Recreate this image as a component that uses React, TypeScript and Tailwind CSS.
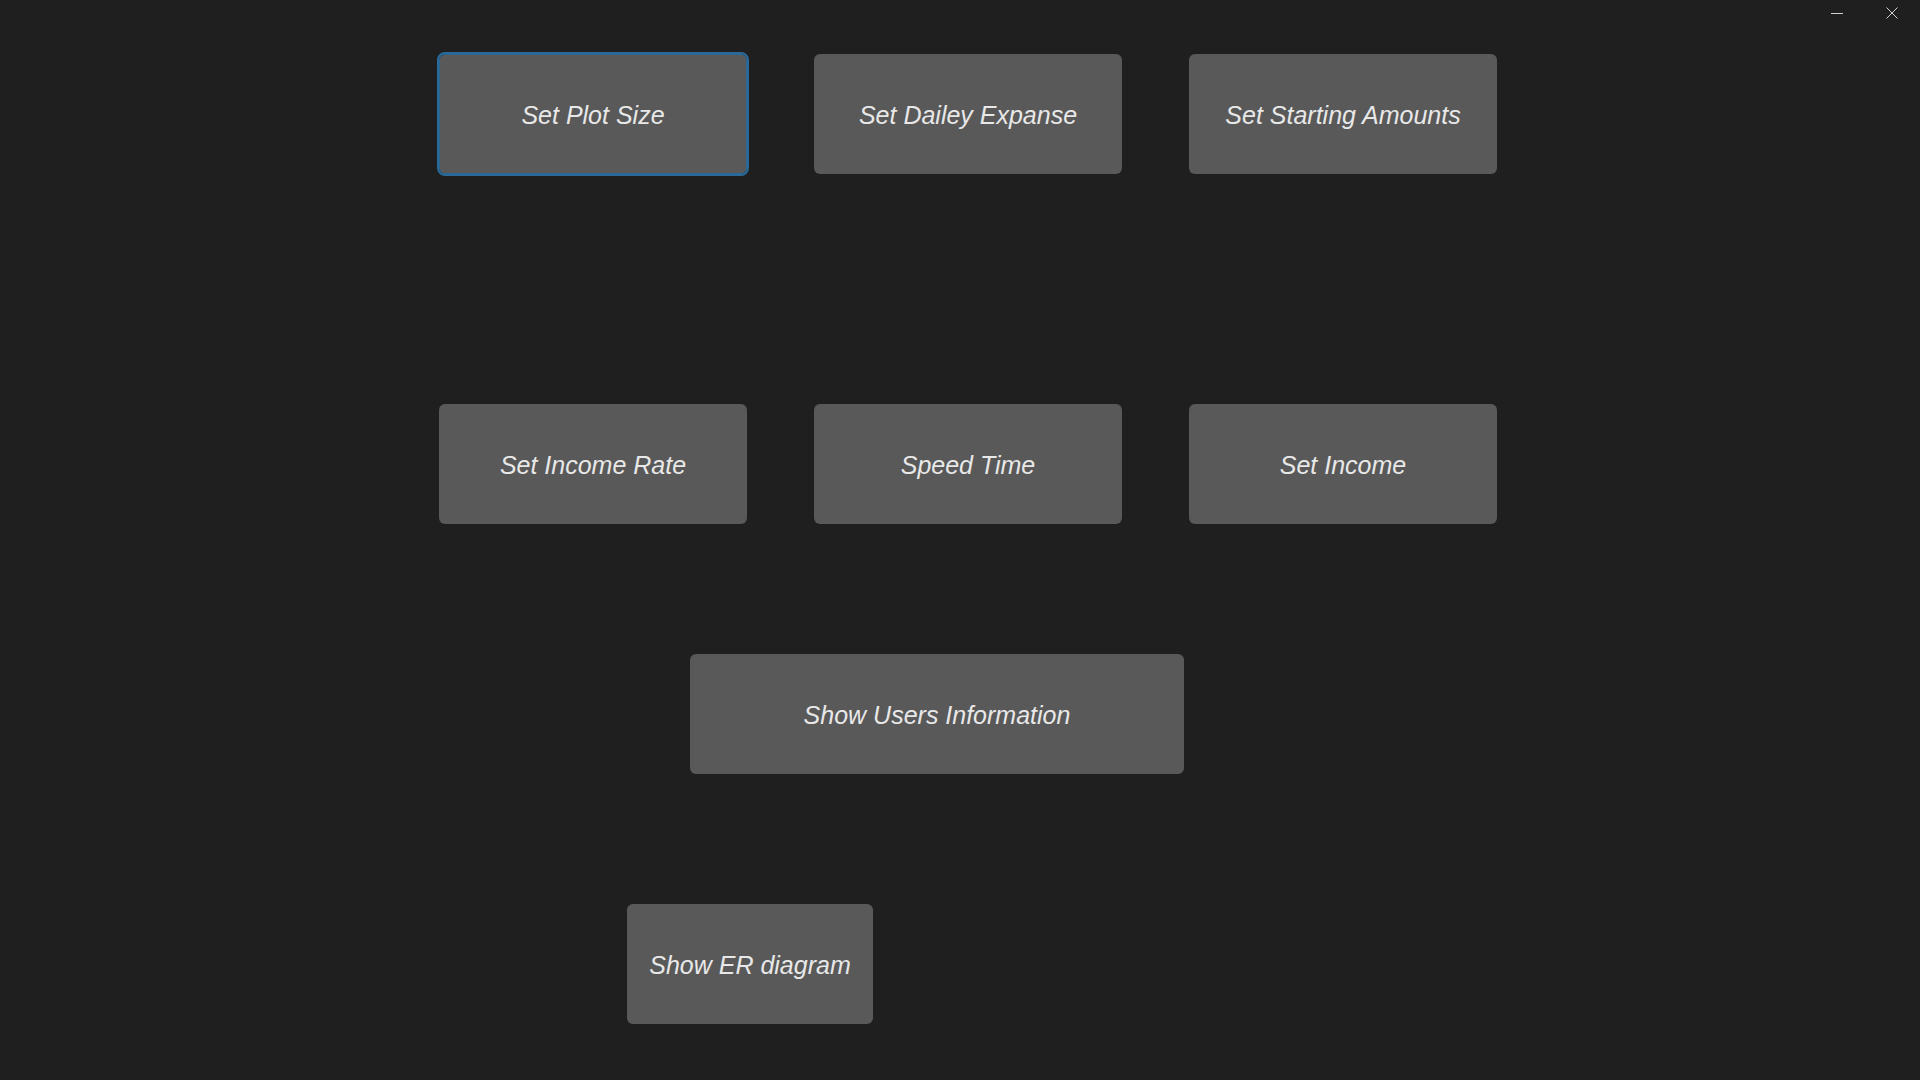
type Btn = { label: string; width: string; focused?: boolean };

function PanelButton({ label, width, focused }: Btn) {
  return (
    <button
      className={`h-[120px] ${width} flex items-center justify-center pt-[4px] rounded-[6px] bg-[#595959] text-[25px] italic text-[#e8e8e8] ${
        focused ? "border border-[#2c6690] outline-2 outline-solid outline-[#2a6a9a]" : ""
      }`}
      style={{ fontFamily: '"Liberation Sans", Arial, sans-serif' }}
    >
      {label}
    </button>
  );
}

export default function App() {
  return (
    <div className="relative w-[1920px] h-[1080px] overflow-hidden bg-[#1f1f1f]">
      {/* window controls */}
      <div className="absolute top-[7px] right-[22px] flex items-center gap-[43px]">
        <svg width="12" height="12" viewBox="0 0 12 12">
          <line x1="0" y1="6.5" x2="12" y2="6.5" stroke="#d0d0d0" strokeWidth="1" />
        </svg>
        <svg width="12" height="12" viewBox="0 0 12 12">
          <line x1="0.5" y1="0.5" x2="11.5" y2="11.5" stroke="#d0d0d0" strokeWidth="1" />
          <line x1="11.5" y1="0.5" x2="0.5" y2="11.5" stroke="#d0d0d0" strokeWidth="1" />
        </svg>
      </div>

      <div className="flex flex-col pt-[54px]">
        <div className="flex gap-[67px] ml-[439px]">
          <PanelButton label="Set Plot Size" width="w-[308px]" focused />
          <PanelButton label="Set Dailey Expanse" width="w-[308px]" />
          <PanelButton label="Set Starting Amounts" width="w-[308px]" />
        </div>

        <div className="flex gap-[67px] ml-[439px] mt-[230px]">
          <PanelButton label="Set Income Rate" width="w-[308px]" />
          <PanelButton label="Speed Time" width="w-[308px]" />
          <PanelButton label="Set Income" width="w-[308px]" />
        </div>

        <div className="flex ml-[690px] mt-[130px]">
          <PanelButton label="Show Users Information" width="w-[494px]" />
        </div>

        <div className="flex ml-[627px] mt-[130px]">
          <PanelButton label="Show ER diagram" width="w-[246px]" />
        </div>
      </div>
    </div>
  );
}
